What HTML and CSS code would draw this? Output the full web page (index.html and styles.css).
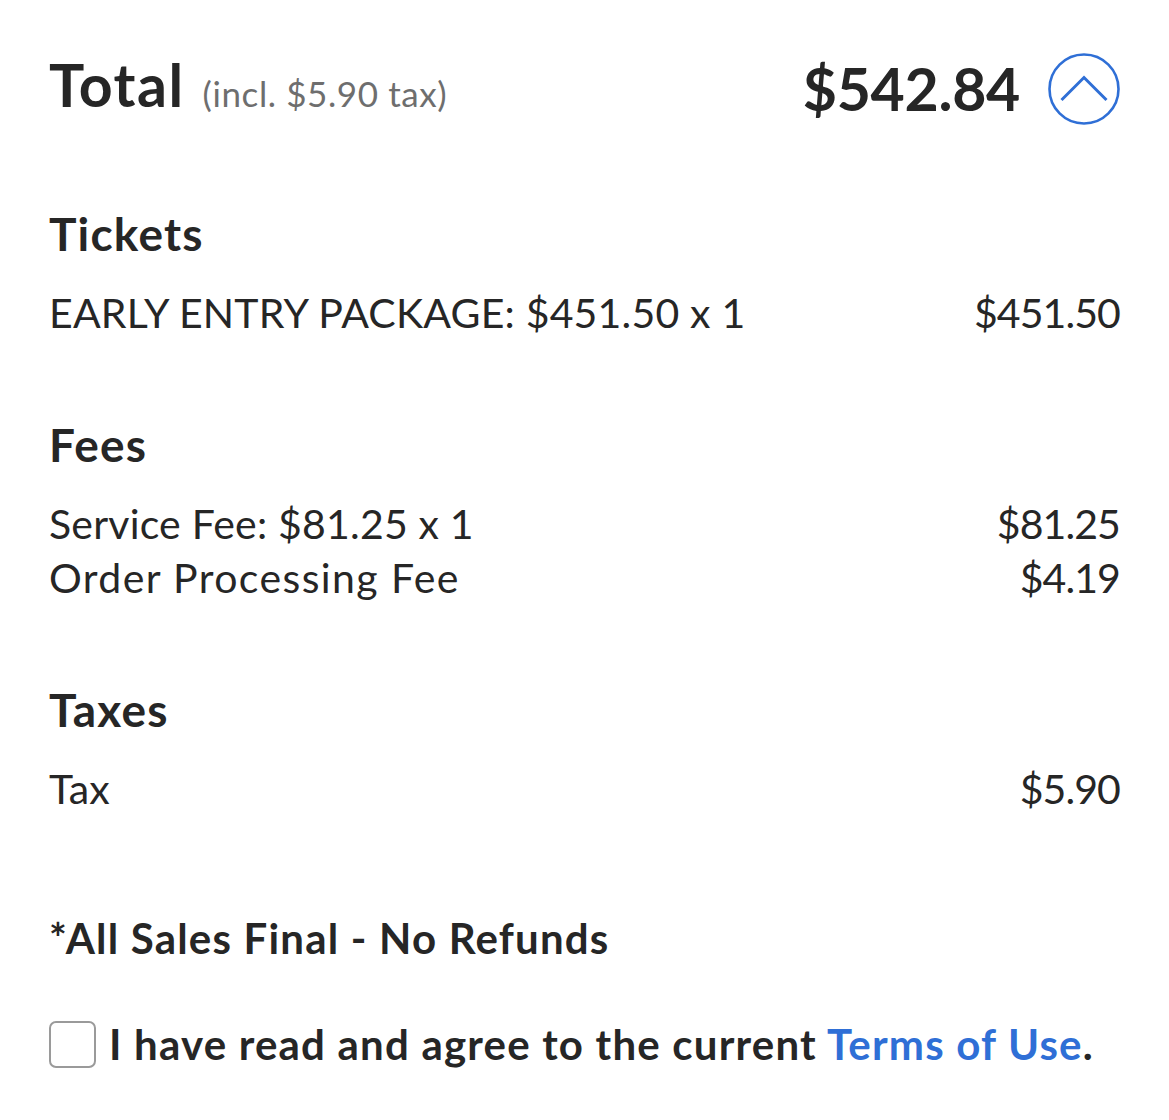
FILE: index.html
```html
<!DOCTYPE html>
<html lang="en">
<head>
<meta charset="utf-8">
<title>Order Summary</title>
<link rel="stylesheet" href="styles.css">
</head>
<body>
<main class="summary">
  <header class="total-row">
    <h1 class="total-label">Total <span class="tax-note">(incl. $5.90 tax)</span></h1>
    <div class="total-right">
      <span class="total-amount">$542.84</span>
      <button class="collapse-btn" aria-label="Collapse">
        <svg viewBox="0 0 72 72" width="72" height="72">
          <circle cx="36" cy="36" r="34.5" fill="none" stroke="#2f6fd6" stroke-width="2.6"/>
          <path d="M13.5 47 L36 24.5 L58.5 47" fill="none" stroke="#2f6fd6" stroke-width="3"/>
        </svg>
      </button>
    </div>
  </header>

  <section class="group group-first">
    <h2 class="group-title">Tickets</h2>
    <div class="line"><span>EARLY ENTRY PACKAGE: $451.50 x 1</span><span class="amount">$451.50</span></div>
  </section>

  <section class="group">
    <h2 class="group-title">Fees</h2>
    <div class="line"><span>Service Fee: $81.25 x 1</span><span class="amount">$81.25</span></div>
    <div class="line"><span class="wide">Order Processing Fee</span><span class="amount">$4.19</span></div>
  </section>

  <section class="group">
    <h2 class="group-title">Taxes</h2>
    <div class="line"><span>Tax</span><span class="amount">$5.90</span></div>
  </section>

  <p class="final-note">*All Sales Final - No Refunds</p>

  <label class="agree">
    <span class="checkbox"></span>
    <span class="agree-text">I have read and agree to the current <a class="terms" href="#">Terms of Use</a>.</span>
  </label>
</main>
</body>
</html>
```

FILE: styles.css
```css
* { box-sizing: border-box; }

html, body {
  margin: 0;
  padding: 0;
  background: #ffffff;
}

body {
  font-family: "Lato", "Noto Sans", sans-serif;
  color: #262626;
}

.summary {
  padding: 53px 49px 0 49px;
  display: flex;
  flex-direction: column;
}

.total-row {
  display: flex;
  justify-content: space-between;
  align-items: center;
  height: 72px;
}

.total-label {
  margin: 0;
  font-size: 59px;
  font-weight: 700;
  line-height: 72px;
  letter-spacing: 1.5px;
}

.tax-note {
  font-size: 35px;
  font-weight: 400;
  color: #6e6e6e;
  letter-spacing: 0.6px;
  margin-left: 2px;
}

.total-right {
  display: flex;
  align-items: center;
  gap: 28px;
}

.total-amount {
  font-size: 59px;
  font-weight: 700;
  line-height: 72px;
  letter-spacing: -0.3px;
}

.collapse-btn {
  border: 0;
  padding: 0;
  margin: 0;
  background: none;
  width: 72px;
  height: 72px;
  display: block;
}

.collapse-btn svg { display: block; }

.group {
  margin-top: 80px;
}

.group-first {
  margin-top: 84px;
}

.group-title {
  margin: 0 0 27px 0;
  font-size: 46px;
  font-weight: 700;
  line-height: 50px;
  letter-spacing: 1.2px;
}

.line {
  display: flex;
  justify-content: space-between;
  font-size: 41px;
  line-height: 54px;
  letter-spacing: 0.2px;
}

.line .wide {
  letter-spacing: 1.4px;
}

.line .amount {
  letter-spacing: -0.9px;
}

.final-note {
  margin: 97px 0 0 0;
  font-size: 42px;
  font-weight: 700;
  line-height: 50px;
  letter-spacing: 1.2px;
}

.agree {
  margin-top: 54px;
  display: flex;
  align-items: center;
  gap: 13px;
}

.checkbox {
  width: 47px;
  height: 47px;
  border: 2.5px solid #9a9a9a;
  border-radius: 7px;
  flex: none;
}

.agree-text {
  font-size: 42px;
  font-weight: 700;
  line-height: 54px;
  letter-spacing: 1.2px;
}

.terms {
  color: #2f6fd6;
  text-decoration: none;
}
```
